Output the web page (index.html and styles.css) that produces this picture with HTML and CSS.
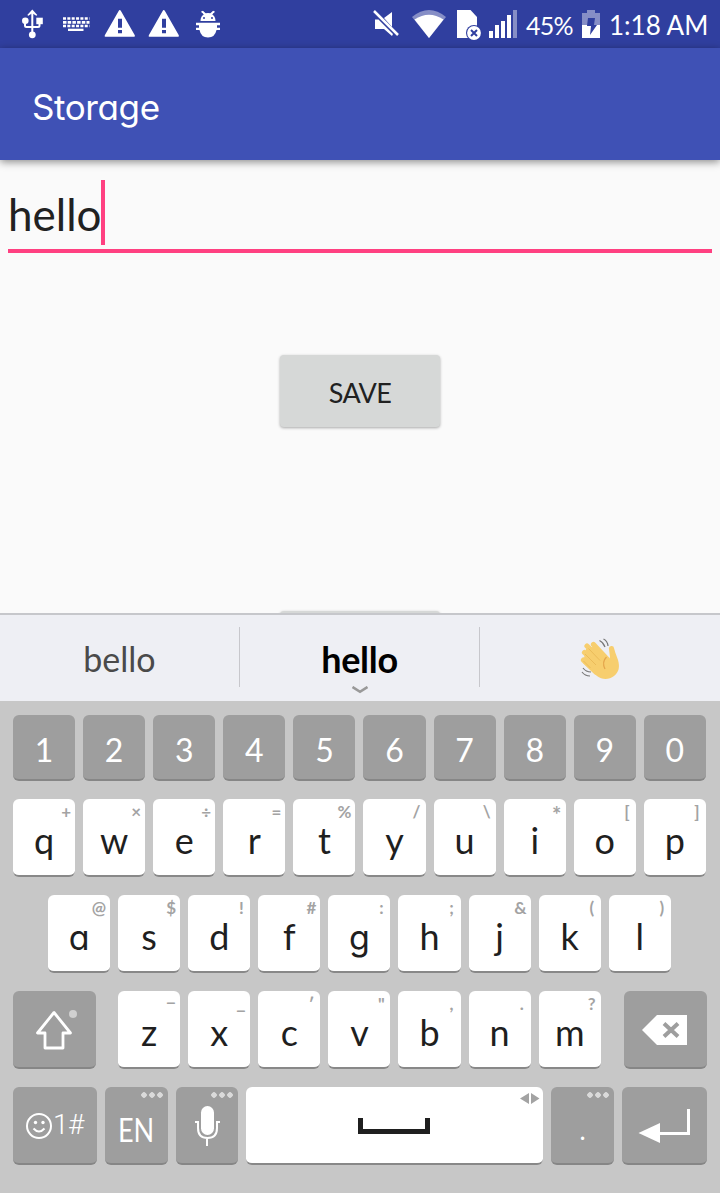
FILE: index.html
```html
<!DOCTYPE html>
<html lang="en">
<head>
<meta charset="utf-8">
<title>Storage</title>
<link rel="stylesheet" href="styles.css">
</head>
<body>
<div class="screen">
  <header class="status">
    <svg class="status-left" width="240" height="48" viewBox="0 0 240 48" fill="#fff">
      <g fill="none" stroke="#fff" stroke-width="2"><path d="M32.3 13V34M25 21v4.500q0 1.500 1.500 1.500H38q1.500 0 1.500-1.500V21"/></g>
      <path d="M32.300 9.500l5 5.500-1 .8-4-2.500-4 2.500-1-.8z"/><circle cx="25.300" cy="20.700" r="3.300"/><circle cx="32.300" cy="34.800" r="3.400"/><path d="M36.300 17.700h6.500v6.500h-6.500z"/>
      <g fill="none" stroke="#fff" stroke-width="2.700"><path stroke-dasharray="3 1.350" d="M63 18.500h26.500M63 26h26.500"/><path stroke-dasharray="3.500 1.200" d="M63 22.300h26.500"/></g>
      <path d="M68 28.700h15.500v2.300H68z"/>
      <path fill-rule="evenodd" d="M119.700 10q.7 0 1.100.7l14 24.500q.5 1.500-.8 1.500h-28.500q-1.300 0-.7-1.500l14-24.500q.3-.7.9-.700zM118 18.700v9h4v-9zM118 30v3.300h4V30z"/>
      <path fill-rule="evenodd" d="M163.700 10q.7 0 1.100.7l14 24.500q.5 1.500-.8 1.500h-28.500q-1.300 0-.7-1.500l14-24.500q.3-.7.9-.700zM162 18.700v9h4v-9zM162 30v3.300h4V30z"/>
      <path d="M200.500 21q0-5 4-7l-3.500-2 1.200-1.200 3.500 2.500q2.300-.8 4.600 0l3.500-2.500 1.200 1.200-3.500 2q4 2 4 7z"/>
      <path d="M196 22.800h24v2.500h-3v2.400h3V30h-3.500q-1.500 7.500-8.500 7.500t-8.500-7.500H196v-2.300h3v-2.400h-3z"/>
      <path d="M202.500 11.500l3 4M213.500 11.500l-3 4" stroke="#fff" stroke-width="1.800"/>
      <circle cx="204" cy="18" r="1" fill="#303f9f"/><circle cx="212" cy="18" r="1" fill="#303f9f"/>
    </svg>
    <svg class="status-radio" width="156" height="48" viewBox="370 0 156 48" fill="#fff">
      <path d="M375 19.500h3.500L393 34l-1 2-8-7h-9zM384 18l8-6v15z"/><path d="M374 11l24 24" stroke="#fff" stroke-width="2.500"/>
      <path fill="#868ec6" d="M412 17q17-14 34 0L429 38z"/><path d="M414.500 19.500q14.500-9.500 29 0L429 38z"/>
      <path d="M457 10h13.500l6.500 7v21h-20z"/><circle cx="474" cy="33" r="8" fill="#303f9f"/><circle cx="474" cy="33" r="6.900"/><path d="M471 30l6 6m0-6l-6 6" stroke="#303f9f" stroke-width="2"/>
      <path d="M489 31h4v7h-4zM495 25h4v13h-4zM501 21h4v17h-4zM507 15h4v23h-4z"/><path fill="#868ec6" d="M513 10h4v28h-4z"/>
    </svg>
    <span class="percent">45%</span>
    <svg class="battery" width="18" height="28" viewBox="0 0 18 28"><path fill="#868ec6" d="M0 3h5V0h8v3h5v12H0z"/><path fill="#fff" d="M0 15h18v13H0z"/><path fill="#303f9f" d="M6 8h7l-1 7h3L8 25l1-9H5z"/></svg>
    <span class="clock">1:18 AM</span>
  </header>
  <div class="appbar"><h1>Storage</h1></div>
  <main class="content">
    <div class="field"><span class="field-text">hello</span><span class="caret"></span></div>
    <button class="btn">SAVE</button>
    <div class="btn next"></div>
  </main>
  <section class="suggest">
    <div class="option">bello</div>
    <div class="option main">hello<svg class="more" width="16" height="8" viewBox="0 0 16 8"><path d="M.5 1L8 5.800 15.500 1" fill="none" stroke="#999" stroke-width="2.600"/></svg></div>
    <div class="option"><svg class="wave" width="40" height="42" viewBox="0 0 40 42">
      <g fill="none" stroke="#f7ce6e" stroke-width="5.200" stroke-linecap="round"><path d="M7 8l14 14M13.500 6.500L27 21M4.500 14.500L18 28M3.500 22L16 34M31.500 10.500L33 22"/></g>
      <path fill="#f7ce6e" d="M6 11L16 8l13 13 5-10 4 11c2 7 1 12-4 16-5 4-12 4-17 0L3 25z"/>
      <path d="M8.500 10.500l11.500 12M5 16l11 11M3.500 23l7 7" stroke="#e9b957" stroke-width=".9"/>
      <path d="M26.500 19q-5 5-1.500 12" fill="none" stroke="#e5a64c" stroke-width="1.300"/>
      <path d="M19.500 2.500q4 2 5.500 6.500M23.500 1q4 2 4.500 7M2 34q3 4 8 4M3 30q3 4 8 4" fill="none" stroke="#777" stroke-width="1.200"/>
    </svg></div>
  </section>
  <section class="keyboard">
    <div class="row digits"><div class="key dark">1</div><div class="key dark">2</div><div class="key dark">3</div><div class="key dark">4</div><div class="key dark">5</div><div class="key dark">6</div><div class="key dark">7</div><div class="key dark">8</div><div class="key dark">9</div><div class="key dark">0</div></div>
    <div class="row top">
      <div class="key">q<i>+</i></div><div class="key">w<i>×</i></div><div class="key">e<i>÷</i></div><div class="key">r<i>=</i></div><div class="key">t<i>%</i></div><div class="key">y<i>/</i></div><div class="key">u<i>\</i></div><div class="key">i<i class="star">*</i></div><div class="key">o<i>[</i></div><div class="key">p<i>]</i></div>
    </div>
    <div class="row home">
      <div class="key alt">a<i>@</i></div><div class="key">s<i>$</i></div><div class="key">d<i>!</i></div><div class="key">f<i>#</i></div><div class="key alt">g<i>:</i></div><div class="key">h<i>;</i></div><div class="key">j<i>&amp;</i></div><div class="key">k<i>(</i></div><div class="key">l<i>)</i></div>
    </div>
    <div class="row lower">
      <div class="key dark wide"><svg class="fill" viewBox="0 0 83 76"><path d="M41 21.500L24.500 42H32v15h18V42h7.500z" fill="none" stroke="#fff" stroke-width="2.800" stroke-linejoin="round"/><circle cx="60" cy="23" r="4" fill="#d0d0d0"/></svg></div>
      <div class="letters"><div class="key">z<i class="dash">–</i></div><div class="key">x<i class="dash low">–</i></div><div class="key">c<i>′</i></div><div class="key">v<i>"</i></div><div class="key">b<i>,</i></div><div class="key">n<i>.</i></div><div class="key">m<i>?</i></div></div>
      <div class="key dark wide"><svg class="fill" viewBox="0 0 83 76"><path d="M18 39l15-15h30v30H33z" fill="#fff"/><path d="M40 32.500l14 13m0-13l-14 13" stroke="#9e9e9e" stroke-width="4"/></svg></div>
    </div>
    <div class="row bottom">
      <div class="key dark symbols"><svg width="26" height="26" viewBox="0 0 26 26" fill="none" stroke="#fff" stroke-width="2"><circle cx="13" cy="13" r="12"/><path d="M7.500 15.500q5.500 6 11 0"/><g fill="#fff" stroke="none"><circle cx="9.500" cy="9.500" r="1.700"/><circle cx="17" cy="9.500" r="1.700"/></g></svg><span>1#</span></div>
      <div class="key dark lang"><span>EN</span><b class="dots"></b></div>
      <div class="key dark"><svg class="fill" viewBox="0 0 62 76"><rect x="25" y="19" width="13" height="29" rx="6.500" fill="#fff"/><path d="M19 35h3v6q0 10 9.500 10T41 41v-6h3M31 51v8" fill="none" stroke="#fff" stroke-width="2"/></svg><b class="dots"></b></div>
      <div class="key space"><svg class="fill" viewBox="0 0 297 76"><path d="M114.500 31v13.500h67V31" fill="none" stroke="#1f1f1f" stroke-width="5"/><path d="M274 11.500l9-5.500v11zM293.500 11.500l-8.500-5.500v11z" fill="#a3a3a3"/></svg></div>
      <div class="key dark period">.<b class="dots"></b></div>
      <div class="key dark"><svg class="fill" viewBox="0 0 85 76"><path d="M16.500 46L38 36v20z" fill="#fff"/><path d="M37 46.500h29.500V22" fill="none" stroke="#fff" stroke-width="3"/></svg></div>
    </div>
  </section>
</div>
</body>
</html>
```
FILE: styles.css
```css
* { box-sizing: border-box; }
body { margin: 0; font-family: Lato, sans-serif; }
.screen { width: 720px; height: 1193px; display: flex; flex-direction: column; background: #fafafa; overflow: hidden; }
svg { display: block; flex: none; }
.status { height: 48px; flex: none; display: flex; background: #303f9f; color: #fff; line-height: 51px; white-space: nowrap; }
.status-radio { margin-left: 130px; }
.percent { width: 56px; font-size: 25px; letter-spacing: -0.7px; }
.battery { margin-top: 10px; }
.clock { margin-left: 9px; font-size: 26px; letter-spacing: 0; }
.appbar { height: 112px; flex: none; background: #3f51b5; box-shadow: 0 2px 8px rgba(0,0,0,.45); padding-left: 32px; z-index: 1; }
h1 { margin: 0; color: #fff; font-family: Inter, sans-serif; font-feature-settings: "cv11"; font-weight: 400; font-size: 35px; line-height: 119px; letter-spacing: -0.4px; }
.content { height: 453px; flex: none; overflow: hidden; padding: 20px 8px 0; }
.field { height: 73px; border-bottom: 4px solid #ff4081; display: flex; color: #212121; font-size: 44px; line-height: 68px; }
.field-text { width: 93px; letter-spacing: 0; }
.caret { width: 4px; height: 65px; background: #ff4081; }
.btn { display: block; width: 160px; height: 72px; margin: 102px auto 0; border: 0; border-radius: 4px; padding: 2px 0 0; background: #d6d8d7; box-shadow: 0 1px 3px rgba(0,0,0,.33); font: 27px/72px Lato, sans-serif; color: #212121; letter-spacing: -0.6px; }
.next { margin-top: 184px; }
.suggest { height: 88px; flex: none; border-top: 2px solid #c6c7cb; background: #eeeff4; display: grid; grid-template-columns: repeat(3, 1fr); padding: 12px 0 14px; z-index: 1; }
.option { height: 60px; display: flex; justify-content: center; position: relative; border-right: 1px solid #c7c7cc; font-size: 34px; line-height: 64px; color: #4a4a4a; }
.option:last-child { border: 0; }
.main { font-weight: 700; font-size: 36px; line-height: 65px; letter-spacing: -0.3px; color: #000; }
.more { position: absolute; left: 112px; top: 59px; }
.wave { margin-top: 11px; }
.keyboard { flex: 1; background: #c7c7c7; padding: 14px 13px 28px; display: flex; flex-direction: column; gap: 18px; }
.row { display: grid; gap: 8px; grid-template-columns: repeat(10, 62.1px); grid-template-rows: 78px; height: 78px; flex: none; }
.digits { height: 66px; grid-template-rows: 66px; }
.home { grid-template-columns: repeat(9, 62.1px); padding-left: 35px; }
.lower { grid-template-columns: 83px 484px 83px; gap: 22px; }
.letters { display: grid; gap: 8px; grid-template-columns: repeat(7, 62.1px); grid-template-rows: 78px; padding-left: .1px; }
.bottom { grid-template-columns: 84px 63px 62px 297px 63px 85px; }
.key { position: relative; border-radius: 6px; background: #fff; border-bottom: 2px solid #888; text-align: center; font-size: 36px; line-height: 83px; color: #1f1f1f; overflow: hidden; }
.dark { background: #9e9e9e; color: #fff; border-bottom-color: #868686; }
.digits .key { font-size: 32px; line-height: 70px; }
.alt { font-family: Inter, sans-serif; font-feature-settings: "cv11"; font-size: 34px; line-height: 85px; }
.key i { position: absolute; right: 4px; top: 1px; min-width: 10px; font: 700 17px/24px Lato, sans-serif; color: #a3a3a3; }
.key i.star { top: 4px; font-size: 22px; }
.key i.dash { top: -1px; transform: scaleX(1.15); }
.key i.low { top: 7px; }
.fill { width: 100%; height: 76px; }
.symbols { display: flex; align-items: center; justify-content: center; gap: 1px; }
.symbols svg { margin-top: 2px; }
.symbols span { font: 300 28px/80px Roboto, sans-serif; letter-spacing: -0.5px; }
.lang span { display: inline-block; font-size: 33px; transform: scaleX(.82); margin: 0 -5px; line-height: 80px; }
.period { font-size: 26px; line-height: 86px; }
.dots { position: absolute; right: 4px; top: 5px; width: 24px; height: 6px; background: radial-gradient(circle, #dadada 2.5px, transparent 3px) 0 0 / 8px 6px; }
```
